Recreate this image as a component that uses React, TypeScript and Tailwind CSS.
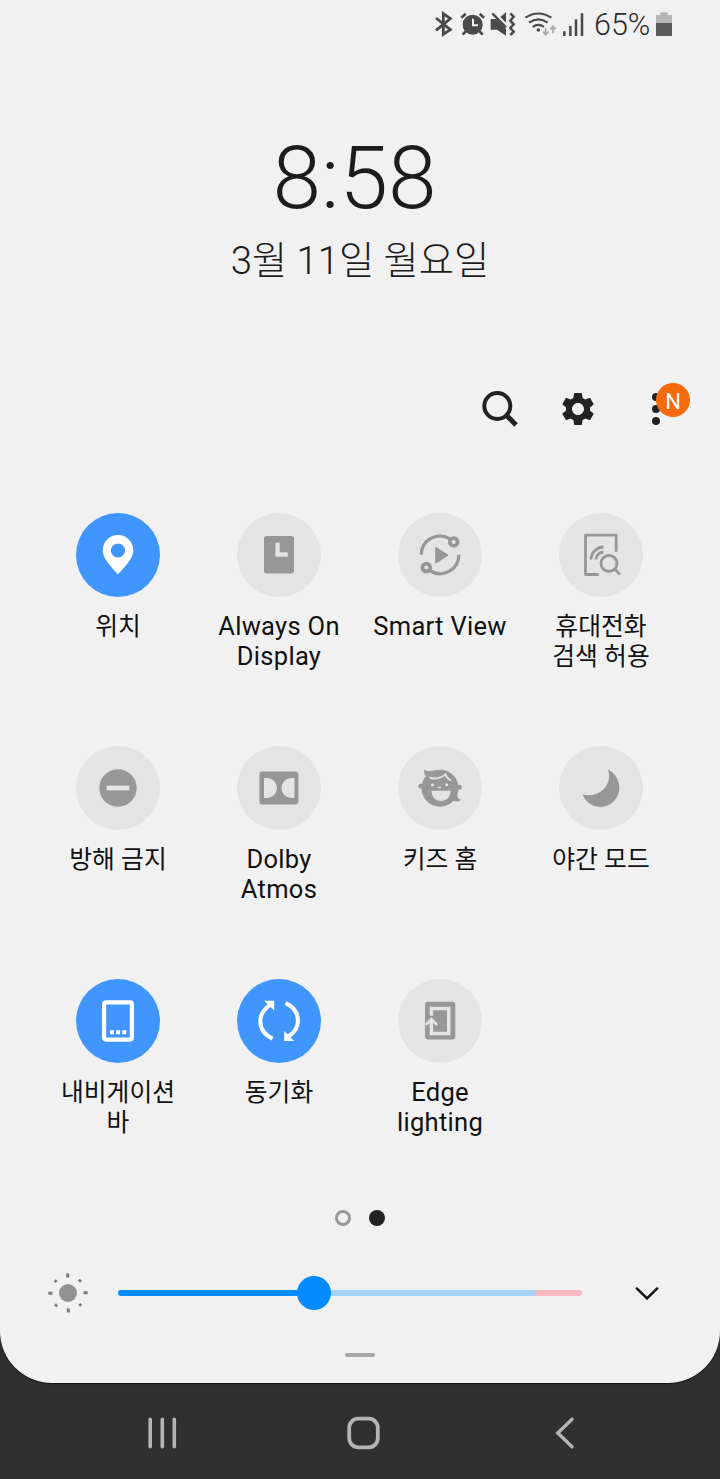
import type { ReactNode } from "react";
import { MdSettings } from "react-icons/md";

type Tile = {
  id: string;
  lines: string[];
  korean?: boolean;
  active?: boolean;
  icon: ReactNode;
};

const DIM = "#979797";
const OFF = "#e4e4e4";

const tiles: Tile[] = [
  {
    id: "location",
    lines: ["위치"],
    korean: true,
    active: true,
    icon: (
      <path
        fill="#fff"
        fillRule="evenodd"
        d="M42 61.4C38.5 57 26.7 46.6 26.7 37.2a15.3 15.3 0 0 1 30.6 0C57.3 46.6 45.5 57 42 61.4ZM42 30.4a7.1 7.1 0 1 0 0 14.2a7.1 7.1 0 0 0 0-14.2Z"
      />
    ),
  },
  {
    id: "aod",
    lines: ["Always On", "Display"],
    icon: (
      <>
        <rect x="27" y="23" width="30" height="37.4" rx="3" fill={DIM} />
        <path d="M38.5 29.7h4.2v9.6h8v4.4H38.5Z" fill={OFF} />
      </>
    ),
  },
  {
    id: "smart-view",
    lines: ["Smart View"],
    icon: (
      <g fill="none" stroke={DIM} strokeWidth="3.3">
        <path d="M23.2 41.8A18.8 18.8 0 0 1 52.4 26.2M60.9 41.8A18.8 18.8 0 0 1 31.6 57.4" />
        <circle cx="55.7" cy="29" r="3.9" strokeWidth="3.8" />
        <circle cx="28.3" cy="54.6" r="3.9" strokeWidth="3.8" />
        <path d="M38 34.8v14.8L49.5 42.2Z" fill={DIM} strokeWidth="1.6" strokeLinejoin="round" />
      </g>
    ),
  },
  {
    id: "phone-search",
    lines: ["휴대전화", "검색 허용"],
    korean: true,
    icon: (
      <g fill="none" stroke={DIM} strokeWidth="2.8">
        <path d="M57.2 38.7V22.2H26.5V61.5H39.7" strokeLinejoin="round" />
        <path d="M32 46.5A12.8 12.8 0 0 1 44.5 34M37 46.5A7.8 7.8 0 0 1 44.5 39" />
        <circle cx="50" cy="50.3" r="8" />
        <path d="M55.8 56.1L61 61.4" />
      </g>
    ),
  },
  {
    id: "dnd",
    lines: ["방해 금지"],
    korean: true,
    icon: (
      <>
        <circle cx="42" cy="42" r="18.7" fill={DIM} />
        <rect x="30.7" y="39.6" width="22.6" height="4.8" fill={OFF} />
      </>
    ),
  },
  {
    id: "dolby",
    lines: ["Dolby", "Atmos"],
    icon: (
      <>
        <rect x="22.4" y="25.4" width="39" height="33" rx="3" fill={DIM} />
        <path d="M27 32h3a10 10 0 0 1 0 20h-3ZM57.4 32h-3a10 10 0 0 0 0 20h3Z" fill={OFF} />
      </>
    ),
  },
  {
    id: "kids",
    lines: ["키즈 홈"],
    korean: true,
    icon: (
      <>
        <circle cx="42" cy="42.2" r="18.5" fill={DIM} />
        <ellipse cx="23.3" cy="40.2" rx="2.9" ry="2.4" fill={DIM} />
        <ellipse cx="60.8" cy="41.2" rx="2.9" ry="2.4" fill={DIM} />
        <path d="M26.3 23.3C28 25.2 30.5 25.8 36 24.6L28.5 31C26.2 29 25.6 26 26.3 23.3ZM59.4 43C58.8 48 59 53 63 53.7C61 55.8 58 56 54 54Z" fill={DIM} />
        <path d="M31.3 31.6C37 33.6 43.6 32 47.6 28.4C48.4 31 50.5 33.4 53.3 34.6" fill="none" stroke={OFF} strokeWidth="1.8" />
        <circle cx="34.4" cy="38.8" r="1.5" fill={OFF} />
        <circle cx="48.7" cy="38.8" r="1.5" fill={OFF} />
        <path d="M39.8 41q1.6 1 3.2 0" fill="none" stroke={OFF} strokeWidth="1.3" />
        <path d="M33.4 44.8H52.6C52.6 51 48.6 55 43 55S33.8 51 33.4 44.8Z" fill={OFF} />
      </>
    ),
  },
  {
    id: "night",
    lines: ["야간 모드"],
    korean: true,
    icon: (
      <path
        fill={DIM}
        d="M49 23.5C56 27 60.4 34 60.4 41.6A19.3 19.3 0 0 1 41.2 60.9C33.5 60.9 26.4 56 23.6 48.6C31 50.6 39.5 48.6 44.8 43C50 37.6 51.4 30.5 49 23.5Z"
      />
    ),
  },
  {
    id: "navbar",
    lines: ["내비게이션", "바"],
    korean: true,
    active: true,
    icon: (
      <>
        <rect x="28.1" y="23.4" width="27.8" height="37.2" rx="2" fill="none" stroke="#fff" strokeWidth="4.2" />
        <path d="M34 51.3h4v4h-4ZM40.1 51.3h4v4h-4ZM46.3 51.3h4v4h-4Z" fill="#fff" />
      </>
    ),
  },
  {
    id: "sync",
    lines: ["동기화"],
    korean: true,
    active: true,
    icon: (
      <>
        <path
          d="M35.6 59.6C27.6 56 23.3 49.4 23.3 42C23.3 35.5 27 30 33.4 25.6M48.6 24.2C56.6 27.6 60.9 34.4 60.9 42C60.9 48.5 57.2 53.8 50.8 58"
          fill="none"
          stroke="#fff"
          strokeWidth="4"
        />
        <path d="M27.2 21.7H37.2V31.5ZM57.2 61.9H47.2V52.1Z" fill="#fff" />
      </>
    ),
  },
  {
    id: "edge",
    lines: ["Edge", "lighting"],
    icon: (
      <>
        <rect x="27" y="22.8" width="30.3" height="37.6" rx="3" fill={DIM} />
        <path d="M33.4 36.7V29.6H50.7V54.4H33.4V41" fill="none" stroke={OFF} strokeWidth="3.5" />
        <path d="M28.6 45L33.4 40.3L38.2 45" fill="none" stroke={OFF} strokeWidth="2.8" strokeLinecap="round" />
      </>
    ),
  },
];

function StatusBar() {
  return (
    <div className="flex h-[48px] items-center pl-[434px]">
      <svg className="h-[26px] w-[19px] shrink-0" viewBox="27 33 57 78">
        <path d="M33 54L76 89L55 103V41L76 56L33 91" fill="none" stroke="#4a4a4a" strokeWidth="8.5" />
      </svg>
      <svg className="ml-[7px] h-[26px] w-[26px] shrink-0" viewBox="105 33 78 78">
        <circle cx="143" cy="74" r="30" fill="#4a4a4a" />
        <path d="M109 53L122 41M164 41L177 53M122 94L113 104M164 94L173 104" stroke="#4a4a4a" strokeWidth="8" />
        <path d="M144 56V76H159" fill="none" stroke="#f1f1f1" strokeWidth="6" />
      </svg>
      <svg className="ml-[4px] h-[26px] w-[26px] shrink-0" viewBox="195 33 78 78">
        <path d="M197 57H214L243 87V107L216 89H197ZM226 51L243 37V68Z" fill="#4a4a4a" />
        <path d="M202 40L243 82" stroke="#4a4a4a" strokeWidth="7" />
        <path d="M256 40L266 50L256 62L266 73L256 84L266 95L256 105" fill="none" stroke="#4a4a4a" strokeWidth="7.5" />
      </svg>
      <svg className="ml-[8px] h-[26px] w-[33px] shrink-0" viewBox="297 33 99 78">
        <g fill="none" stroke="#4a4a4a" strokeWidth="6.5">
          <path d="M301 53Q340 28 379 53" />
          <path d="M312 68Q340 48 368 68" />
          <path d="M323 81Q340 68 357 81" />
        </g>
        <circle cx="340" cy="90" r="5.5" fill="#4a4a4a" />
        <path d="M362 84V103M354 95L362 104L370 95M384 100V80M376 88L384 79L392 88" fill="none" stroke="#a8a8a8" strokeWidth="5" />
      </svg>
      <svg className="ml-[5px] h-[26px] w-[22px] shrink-0" viewBox="411 33 66 78">
        <path d="M418 94V108M436 78V108M453 58V108M471 40V108" stroke="#4a4a4a" strokeWidth="7.5" />
      </svg>
      <span className="ml-[10px] w-[62px] pt-[3px] text-[30.5px] leading-none font-light whitespace-nowrap text-[#2c2c2c]">
        65%
      </span>
      <svg className="h-[26px] w-[16px] shrink-0" viewBox="693 33 48 78">
        <path d="M693 45H706V37H728V45H741V69H693Z" fill="#b5b5b5" />
        <path d="M693 69H741V108H693Z" fill="#5a5a5a" />
      </svg>
    </div>
  );
}

function Toolbar() {
  return (
    <div className="flex h-[52px] items-center pl-[480px]">
      <svg className="size-[40px] shrink-0" viewBox="0 0 40 40" fill="none" stroke="#222">
        <circle cx="17.3" cy="17" r="13" strokeWidth="4" />
        <path d="M26.5 26.2L36 36" strokeWidth="5" />
      </svg>
      <MdSettings className="ml-[38px] size-[40px] shrink-0 text-[#222]" />
      <div className="relative ml-[54px] flex w-[8px] shrink-0 flex-col gap-[4px]">
        <i className="size-[8px] rounded-full bg-[#222]" />
        <i className="size-[8px] rounded-full bg-[#222]" />
        <i className="size-[8px] rounded-full bg-[#222]" />
        <span className="absolute -top-[10px] left-[4px] flex size-[34px] items-center justify-center rounded-full bg-[#f56a0c] pt-[3px] text-[22px] text-white">
          N
        </span>
      </div>
    </div>
  );
}

function QuickTile({ tile }: { tile: Tile }) {
  return (
    <div className="flex flex-col items-center">
      <svg className="size-[84px]" viewBox="0 0 84 84">
        <circle cx="42" cy="42" r="42" fill={tile.active ? "#4196fd" : OFF} />
        {tile.icon}
      </svg>
      <div
        className={`text-center whitespace-nowrap text-[#111] ${
          tile.korean
            ? "mt-[15px] pl-[1px] text-[24.8px] leading-[30px]"
            : "mt-[14px] pl-[1px] text-[25.5px] leading-[30px] tracking-[0.3px]"
        }`}
      >
        {tile.lines.map((line) => (
          <div key={line} className="h-[30px]">
            {line}
          </div>
        ))}
      </div>
    </div>
  );
}

function Brightness() {
  return (
    <div className="flex h-[44px] items-center pl-[47px]">
      <svg className="size-[42px] shrink-0" viewBox="-21 -21 42 42">
        <circle r="9" fill="#929292" />
        {[0, 45, 90, 135, 180, 225, 270, 315].map((deg) => (
          <rect
            key={deg}
            x="-1.5"
            y={deg % 90 ? -18.4 : -19.6}
            width="3"
            height={deg % 90 ? 2.6 : 4}
            fill="#777"
            transform={`rotate(${deg - 1})`}
          />
        ))}
      </svg>
      <div className="relative ml-[29px] flex h-[6px] w-[464px] shrink-0 items-center">
        <div className="h-full w-[196px] rounded-l-full bg-[#048bff]" />
        <div className="h-full w-[222px] bg-[#a6d1f8]" />
        <div className="h-full w-[46px] rounded-r-full bg-[#f7b9bf]" />
        <div className="absolute left-[179px] size-[34px] rounded-full bg-[#048bff]" />
      </div>
      <svg className="ml-[53px] h-[14px] w-[24px] shrink-0" viewBox="0 0 24 14">
        <path d="M1.8 2.4L12 12.4L22.2 2.4" fill="none" stroke="#111" strokeWidth="2.4" strokeLinecap="round" />
      </svg>
    </div>
  );
}

function NavBar() {
  return (
    <div className="flex h-[96px] items-center pt-[3px] pl-[146px]">
      <svg className="h-[34px] w-[32px]" viewBox="0 0 32 34">
        <path d="M4.2 3.2V30.8M16.3 3.2V30.8M28.3 3.2V30.8" stroke="#b4b4b4" strokeWidth="3.6" strokeLinecap="round" />
      </svg>
      <svg className="ml-[168px] size-[36px]" viewBox="0 0 36 36">
        <rect x="3.2" y="3.7" width="28.6" height="28.6" rx="9" fill="none" stroke="#b4b4b4" strokeWidth="3.8" />
      </svg>
      <svg className="ml-[172px] h-[34px] w-[22px]" viewBox="0 0 22 34">
        <path d="M18 3.2L3.8 17L18 30.8" fill="none" stroke="#b4b4b4" strokeWidth="3.4" strokeLinecap="round" />
      </svg>
    </div>
  );
}

export default function App() {
  return (
    <div className="h-[1479px] w-[720px] overflow-hidden bg-[#303030] font-['Roboto','Noto_Sans_CJK_KR',sans-serif]">
      <div className="flex h-[1383px] flex-col rounded-b-[52px] bg-[#f1f1f1] shadow-[0_1px_1px_#111]">
        <StatusBar />
        <div className="mt-[77px] pr-[11px] text-center text-[87.5px] leading-[106px] font-light text-[#1c1c1c]">
          8:58
        </div>
        <div className="mt-[5px] text-center text-[38.3px] leading-[50px] font-light text-[#1c1c1c]">
          3월 11일 월요일
        </div>
        <div className="mt-[97px]">
          <Toolbar />
        </div>
        <div className="mt-[78px] grid auto-rows-[233px] grid-cols-[repeat(4,161px)] pl-[37px]">
          {tiles.map((tile) => (
            <QuickTile key={tile.id} tile={tile} />
          ))}
        </div>
        <div className="-mt-[2px] flex h-[16px] justify-center gap-[18px]">
          <i className="size-[16px] rounded-full border-[3px] border-[#999]" />
          <i className="size-[16px] rounded-full bg-[#222]" />
        </div>
        <div className="mt-[45px]">
          <Brightness />
        </div>
        <div className="mx-auto mt-[38px] h-[4px] w-[30px] rounded-full bg-[#a9a9a9]" />
      </div>
      <NavBar />
    </div>
  );
}
